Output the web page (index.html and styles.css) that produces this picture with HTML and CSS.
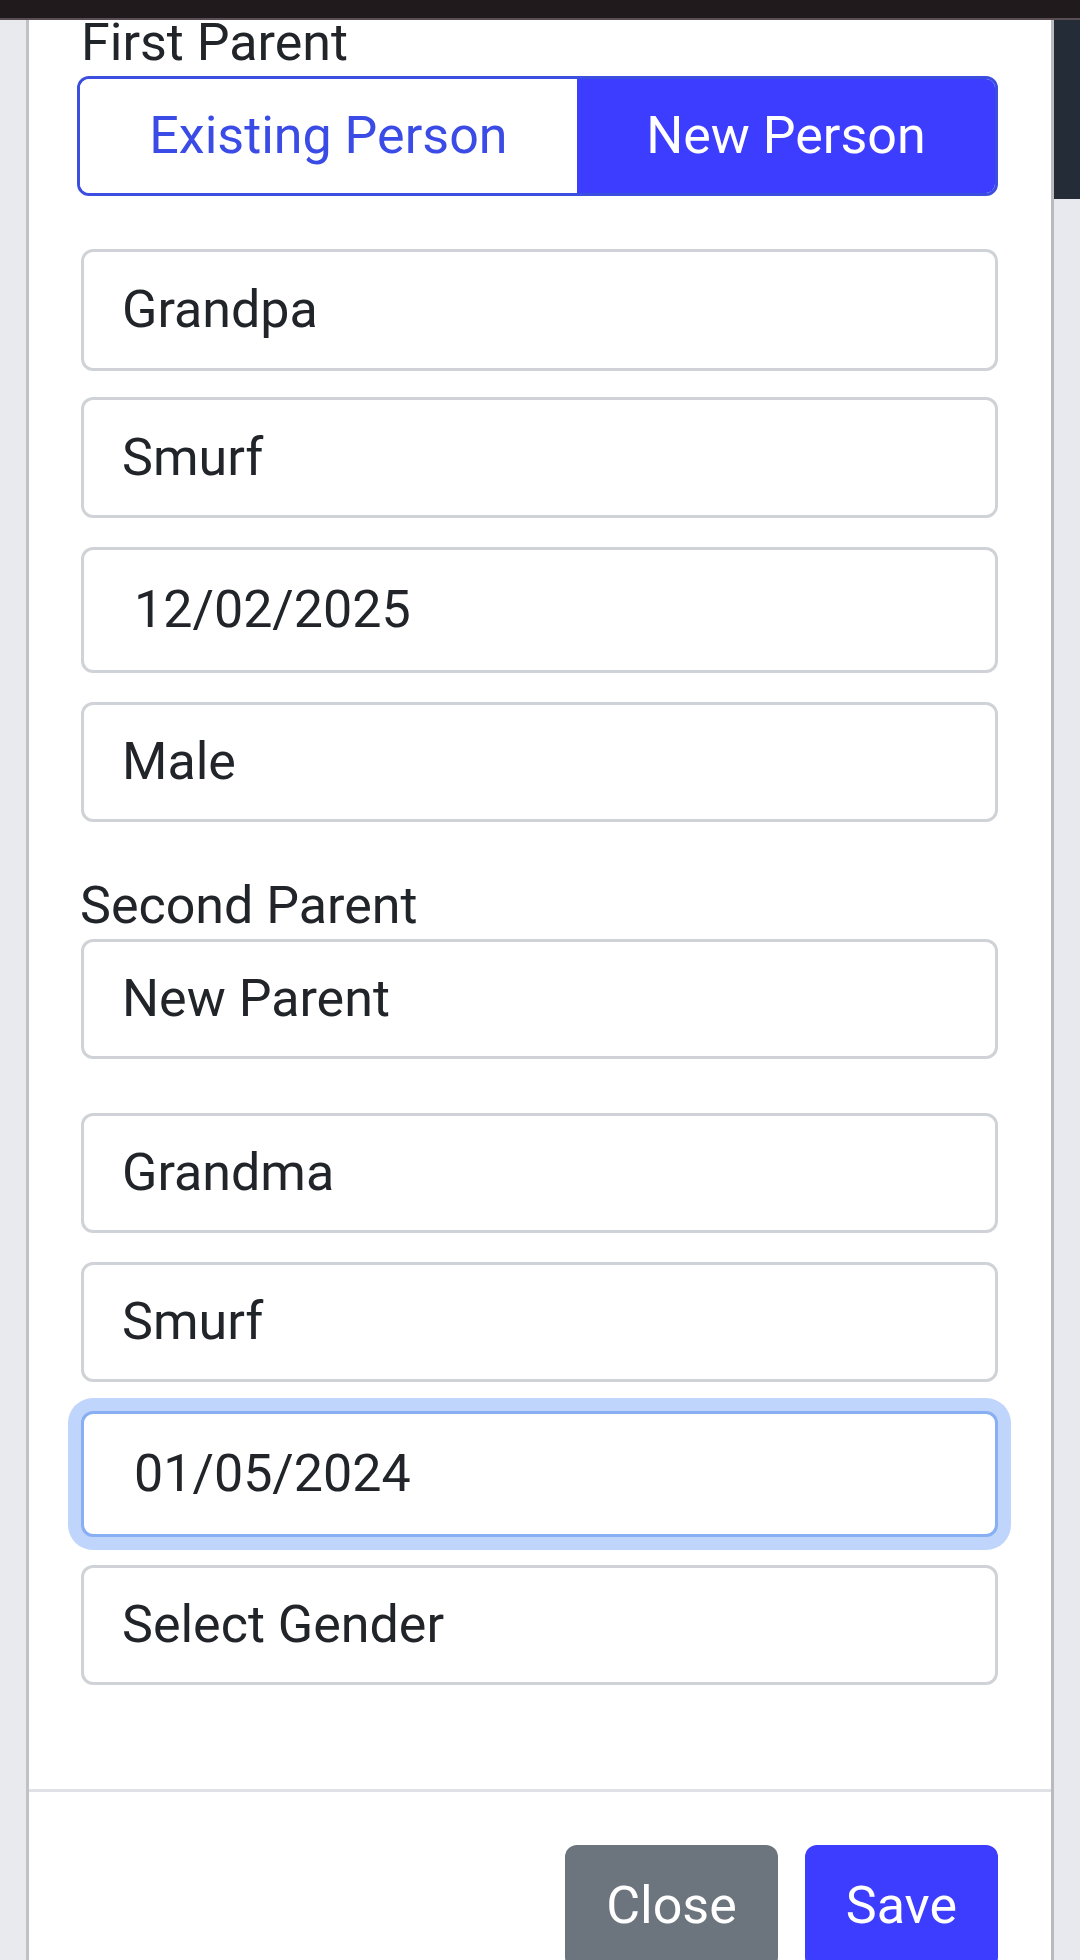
FILE: index.html
```html
<!DOCTYPE html>
<html lang="en">
<head>
<meta charset="utf-8">
<title>Add Parents</title>
<link rel="stylesheet" href="styles.css">
</head>
<body>
<div class="topbar"></div>
<div class="stage">
  <div class="gutter gutter-left"></div>
  <div class="modal">
    <div class="modal-body">
      <div class="label label-first">First Parent</div>
      <div class="toggle">
        <div class="opt">Existing Person</div>
        <div class="opt opt-active">New Person</div>
      </div>
      <div class="fc fc-1">Grandpa</div>
      <div class="fc fc-2">Smurf</div>
      <div class="fc fc-date fc-3">12/02/2025</div>
      <div class="fc fc-4">Male</div>
      <div class="label label-second">Second Parent</div>
      <div class="fc fc-5">New Parent</div>
      <div class="fc fc-6">Grandma</div>
      <div class="fc fc-7">Smurf</div>
      <div class="fc fc-date fc-focus fc-8">01/05/2024</div>
      <div class="fc fc-9">Select Gender</div>
    </div>
    <div class="modal-footer">
      <div class="btn btn-secondary">Close</div>
      <div class="btn btn-primary">Save</div>
    </div>
  </div>
  <div class="gutter gutter-right"><div class="navdark"></div></div>
</div>
</body>
</html>
```

FILE: styles.css
```css
html, body {
  margin: 0;
  padding: 0;
}
body {
  width: 1080px;
  height: 1960px;
  overflow: hidden;
  background: #e9eaee;
  font-family: Roboto, "Liberation Sans", sans-serif;
  color: #212529;
}
.topbar {
  height: 18px;
  background: #201a1d;
  border-bottom: 2px solid #584e54;
}
.stage {
  display: grid;
  grid-template-columns: 26px 1028px 26px;
  height: 1940px;
}
.gutter-left {
  background: #e9eaee;
}
.gutter-right {
  background: #e8e9ee;
}
.navdark {
  height: 179px;
  background: #232c37;
}
.modal {
  background: #ffffff;
  border-left: 3px solid #c0c1c5;
  border-right: 3px solid #b9babe;
  overflow: hidden;
}
.modal-body {
  padding: 0 53px 104px 48px;
}
.label {
  font-size: 52px;
  line-height: 46px;
}
.label-first {
  margin-left: 4px;
}
.label-second {
  margin-top: 61px;
  margin-left: 3px;
}
.toggle {
  margin-top: 10px;
  height: 120px;
  box-sizing: border-box;
  display: flex;
  border: 3px solid #3b4ee0;
  border-radius: 12px;
  overflow: hidden;
}
.opt {
  flex: 1 1 auto;
  display: flex;
  align-items: center;
  justify-content: center;
  font-size: 52px;
  line-height: 78px;
  color: #3a4be6;
  background: #ffffff;
}
.opt-active {
  background: #3d3dff;
  color: #ffffff;
}
.fc {
  margin-left: 4px;
  box-sizing: border-box;
  height: 120px;
  border: 3px solid #cfd3d7;
  border-radius: 12px;
  padding-left: 38px;
  display: flex;
  align-items: center;
  font-size: 52px;
  line-height: 78px;
  color: #212529;
  background: #ffffff;
}
.fc-date {
  padding-left: 50px;
  height: 126px;
}
.fc-focus {
  border-color: #88aef3;
  box-shadow: 0 0 0 13px #c0d5fb;
}
.fc-1 { margin-top: 53px; height: 122px; }
.fc-2 { margin-top: 26px; height: 121px; }
.fc-3 { margin-top: 29px; }
.fc-4 { margin-top: 29px; }
.fc-5 { margin-top: 10px; }
.fc-6 { margin-top: 54px; }
.fc-7 { margin-top: 29px; }
.fc-8 { margin-top: 29px; }
.fc-9 { margin-top: 28px; }
.modal-footer {
  border-top: 3px solid #dee2e6;
  padding: 53px 53px 0 0;
  display: flex;
  justify-content: flex-end;
  gap: 27px;
}
.btn {
  box-sizing: border-box;
  height: 124px;
  padding: 22px 41px 0;
  font-size: 52px;
  line-height: 78px;
  color: #ffffff;
  border-radius: 12px;
}
.btn-secondary {
  background: #6c757d;
}
.btn-primary {
  background: #3d3dff;
}
```
